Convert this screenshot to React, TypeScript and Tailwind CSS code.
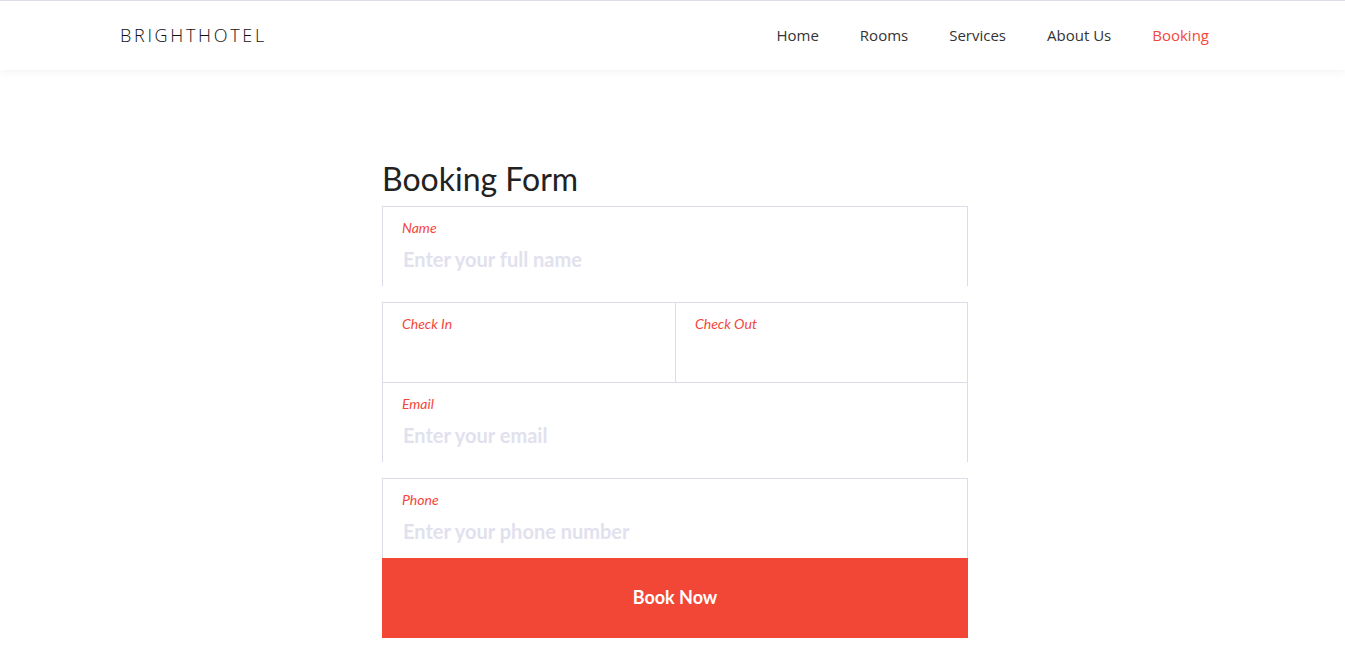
import React from "react";

const navLinks = ["Home", "Rooms", "Services", "About Us", "Booking"];

const Field = ({
  label,
  placeholder,
  className = "",
}: {
  label: string;
  placeholder?: string;
  className?: string;
}) => (
  <div className={`flex flex-col px-[19px] pt-[11px] ${className}`}>
    <label className="text-[14px] italic leading-[20px] text-[#f4473b]">
      {label}
    </label>
    {placeholder && (
      <input
        type="text"
        placeholder={placeholder}
        className="mt-[3px] h-[36px] w-full bg-transparent pl-[1px] text-[20px] font-bold text-[#333] outline-none placeholder:text-[#e1e1ee]"
      />
    )}
  </div>
);

export default function App() {
  return (
    <div
      className="min-h-[657px] bg-white"
      style={{ fontFamily: "Lato, 'Noto Sans', sans-serif" }}
    >
      {/* Navbar */}
      <header className="relative z-10 h-[70px] border-t border-[#dcdce4] bg-white shadow-[0_2px_8px_rgba(0,0,0,0.05)]">
        <div className="flex h-full items-center pl-[120px] pr-[136px] font-['Open_Sans',sans-serif]">
          <a className="text-[18px] font-light tracking-[2.7px] text-[#111]">
            BRIGHTHOTEL
          </a>
          <nav className="ml-auto flex items-center gap-[41px] text-[15px] text-[#333]">
            {navLinks.map((l) => (
              <a
                key={l}
                className={l === "Booking" ? "text-[#f4473b]" : undefined}
              >
                {l}
              </a>
            ))}
          </nav>
        </div>
      </header>

      {/* Form */}
      <main className="flex justify-center pl-[5px] pt-[85px]">
        <div className="w-[586px]">
          <h1 className="mb-[3px] text-[32px] leading-[48px] text-[#222]">
            Booking Form
          </h1>
          <form>
            <Field
              label="Name"
              placeholder="Enter your full name"
              className="h-[80px] border-x border-t border-[#dcdce8]"
            />
            <div className="mt-[16px] grid grid-cols-2 border-x border-t border-[#dcdce8]">
              <Field label="Check In" className="h-[79px]" />
              <Field
                label="Check Out"
                className="h-[79px] border-l border-[#dcdce8]"
              />
            </div>
            <Field
              label="Email"
              placeholder="Enter your email"
              className="h-[80px] border-x border-t border-[#dcdce8]"
            />
            <Field
              label="Phone"
              placeholder="Enter your phone number"
              className="mt-[16px] h-[80px] border-x border-t border-[#dcdce8]"
            />
            <button
              type="button"
              className="h-[80px] w-full bg-[#f24636] pb-[2px] text-[18px] font-bold text-white"
            >
              Book Now
            </button>
          </form>
        </div>
      </main>
    </div>
  );
}
